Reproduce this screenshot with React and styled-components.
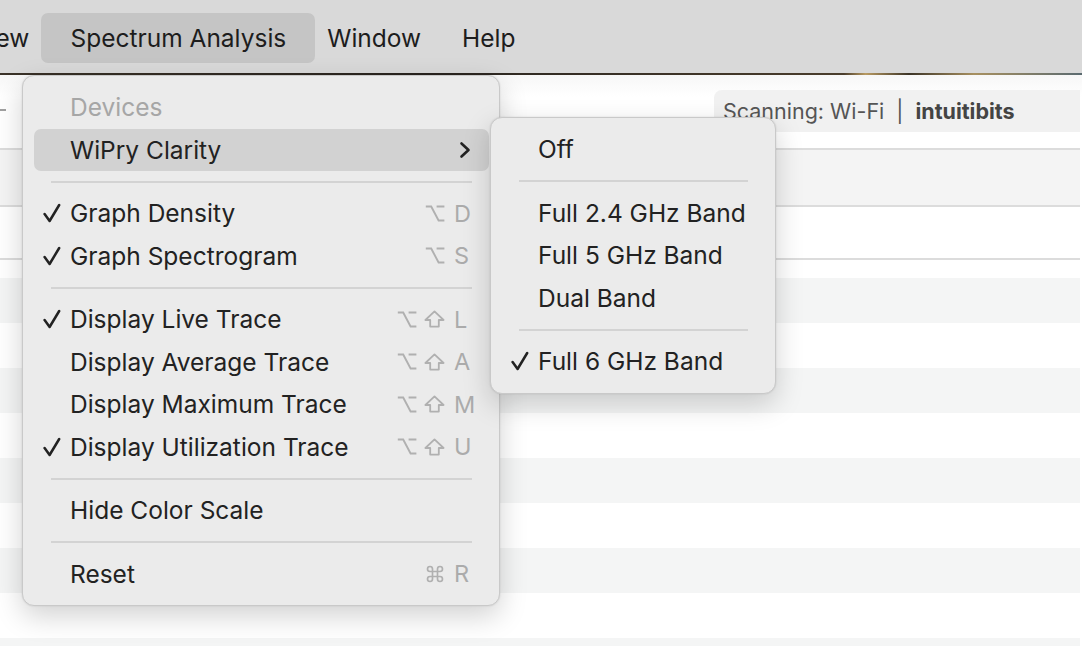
import styled, { createGlobalStyle } from "styled-components"
import { Command } from "lucide-react"

const GlobalStyle = createGlobalStyle`
    html, body {
        margin: 0;
        padding: 0;
        background: #ffffff;
        font-family: "Inter", "Liberation Sans", sans-serif;
        -webkit-font-smoothing: antialiased;
    }
`

const Page = styled.div`
    position: relative;
    width: 1082px;
    height: 646px;
    overflow: hidden;
    background: #ffffff;
`

const MenuBar = styled.div`
    height: 73px;
    background: #d9d9d9;
    display: flex;
    align-items: center;
`

const BarItems = styled.div`
    display: flex;
    align-items: center;
    margin-left: -25px;
    margin-top: 2px;
`

const BarTitle = styled.div`
    height: 50px;
    display: flex;
    align-items: center;
    padding: 0 29px;
    margin: 0 -8.5px;
    border-radius: 7px;
    font-size: 24.5px;
    color: #1d1d1d;
    background: ${(p) => (p.$open ? "#c5c5c5" : "transparent")};
`

const Wallpaper = styled.div`
    height: 2px;
    background: linear-gradient(90deg, #3a3228 0%, #2a2520 40%, #4a3d2c 78%, #b89a62 80%, #3b3326 84%, #a79060 90%, #5a6a70 100%);
`

const Window = styled.div`
    display: flex;
    flex-direction: column;
`

const Header = styled.div`
    height: 73px;
    display: flex;
    align-items: flex-start;
    background: linear-gradient(180deg, #f7f7f7 0%, #ffffff 30%);
`

const Stub = styled.div`
    width: 6px;
    height: 2px;
    background: #a0a0a0;
    margin-top: 34px;
`

const ScanBox = styled.div`
    margin-left: auto;
    margin-right: 2px;
    margin-top: 15px;
    width: 366px;
    height: 42px;
    background: #f1f1f1;
    border-radius: 8px 0 0 0;
    display: flex;
    align-items: center;
    padding-left: 9px;
    box-sizing: border-box;
    font-size: 21.5px;
    color: #555555;
    white-space: nowrap;

    b {
        color: #444444;
        font-weight: 700;
    }
`

const Pipe = styled.span`
    margin: 0 12px;
`

const Band = styled.div`
    height: ${(p) => p.$h}px;
    background: ${(p) => (p.$gray ? "#f4f4f4" : "#ffffff")};
    border-top: ${(p) => (p.$line ? "2px solid #dcdcdc" : "none")};
    margin-right: 2px;
`

const Stripe = styled.div`
    height: 45px;
    flex-shrink: 0;
    background: ${(p) => (p.$gray ? "#f4f5f5" : "#ffffff")};
    margin-right: 2px;
`

const Menu = styled.div`
    position: absolute;
    left: ${(p) => p.$x}px;
    top: ${(p) => p.$y}px;
    width: ${(p) => p.$w}px;
    box-sizing: border-box;
    padding: 10px 0;
    background: #ebebeb;
    border: 1px solid #c9c9c9;
    border-radius: 12px;
    box-shadow: 0 10px 28px rgba(0, 0, 0, 0.18), 0 0 2px rgba(0, 0, 0, 0.12);
`

const Item = styled.div`
    height: 42.5px;
    margin: 0 10px 0 11px;
    padding: 0 0 0 9px;
    display: flex;
    align-items: center;
    border-radius: 7px;
    font-size: 24.5px;
    color: ${(p) => (p.$disabled ? "#a6a6a6" : "#222222")};
    background: ${(p) => (p.$active ? "#d2d2d2" : "transparent")};
    white-space: nowrap;
`

const CheckCol = styled.div`
    width: 27px;
    flex-shrink: 0;
    display: flex;
    align-items: center;
`

const Label = styled.span`
    flex: 1;
`

const Shortcut = styled.div`
    display: flex;
    align-items: center;
    color: #ababab;
    padding-right: 13px;
`

const Mods = styled.div`
    display: flex;
    align-items: center;
    gap: 7px;
    margin-right: 9px;
`

const Key = styled.span`
    width: 22px;
    font-size: 23.5px;
`

const Chevron = styled.svg`
    margin-right: 18px;
`

const Separator = styled.div`
    height: 21px;
    display: flex;
    align-items: center;
    margin: 0 27px 0 28px;

    &::after {
        content: "";
        flex: 1;
        height: 2px;
        background: #d3d3d3;
    }
`

function Check() {
    return (
        <svg width="18" height="20" viewBox="0 0 18 20">
            <path d="M1.6 11 L6.6 18 L16.2 2" fill="none" stroke="#222" strokeWidth="2.5" strokeLinecap="round" strokeLinejoin="round" />
        </svg>
    )
}

function OptionKey() {
    return (
        <svg width="20" height="17" viewBox="0 0 20 17">
            <path d="M0.8 1.5 H6.2 L13.6 15.5 H19.4 M11.6 1.5 H19.4" fill="none" stroke="#b0b0b0" strokeWidth="1.9" />
        </svg>
    )
}

function ShiftKey() {
    return (
        <svg width="21" height="18" viewBox="0 0 21 18">
            <path d="M10.5 1.4 L19.6 10 H14.8 V16.6 H6.2 V10 H1.4 Z" fill="none" stroke="#b0b0b0" strokeWidth="1.8" strokeLinejoin="round" />
        </svg>
    )
}

function Keys({ opt, shift, cmd, k }) {
    return (
        <Shortcut>
            <Mods>
                {cmd && <Command size={20} strokeWidth={2} color="#b0b0b0" />}
                {opt && <OptionKey />}
                {shift && <ShiftKey />}
            </Mods>
            <Key>{k}</Key>
        </Shortcut>
    )
}

function MenuItem({ checked, label, keys, disabled, active, submenu }) {
    return (
        <Item $disabled={disabled} $active={active}>
            <CheckCol>{checked && <Check />}</CheckCol>
            <Label>{label}</Label>
            {keys && <Keys {...keys} />}
            {submenu && (
                <Chevron width="12" height="18" viewBox="0 0 12 18">
                    <path d="M2.5 2.5 L9.5 9 L2.5 15.5" fill="none" stroke="#222" strokeWidth="2.6" strokeLinecap="round" strokeLinejoin="round" />
                </Chevron>
            )}
        </Item>
    )
}

export default function App() {
    const stripes = [true, false, true, false, true, false, true, false, true]

    return (
        <Page>
            <GlobalStyle />
            <MenuBar>
                <BarItems>
                    <BarTitle>ew</BarTitle>
                    <BarTitle $open>Spectrum Analysis</BarTitle>
                    <BarTitle>Window</BarTitle>
                    <BarTitle>Help</BarTitle>
                </BarItems>
            </MenuBar>
            <Wallpaper />
            <Window>
                <Header>
                    <Stub />
                    <ScanBox>
                        Scanning: Wi-Fi<Pipe>|</Pipe><b>intuitibits</b>
                    </ScanBox>
                </Header>
                <Band $line $gray $h={55} />
                <Band $line $h={51} />
                <Band $line $h={18} />
                {stripes.map((g, i) => (
                    <Stripe key={i} $gray={g} />
                ))}
            </Window>

            <Menu $x={22} $y={75} $w={478}>
                <MenuItem label="Devices" disabled />
                <MenuItem label="WiPry Clarity" active submenu />
                <Separator />
                <MenuItem checked label="Graph Density" keys={{ opt: true, k: "D" }} />
                <MenuItem checked label="Graph Spectrogram" keys={{ opt: true, k: "S" }} />
                <Separator />
                <MenuItem checked label="Display Live Trace" keys={{ opt: true, shift: true, k: "L" }} />
                <MenuItem label="Display Average Trace" keys={{ opt: true, shift: true, k: "A" }} />
                <MenuItem label="Display Maximum Trace" keys={{ opt: true, shift: true, k: "M" }} />
                <MenuItem checked label="Display Utilization Trace" keys={{ opt: true, shift: true, k: "U" }} />
                <Separator />
                <MenuItem label="Hide Color Scale" />
                <Separator />
                <MenuItem label="Reset" keys={{ cmd: true, k: "R" }} />
            </Menu>

            <Menu $x={490} $y={117} $w={286}>
                <MenuItem label="Off" />
                <Separator />
                <MenuItem label="Full 2.4 GHz Band" />
                <MenuItem label="Full 5 GHz Band" />
                <MenuItem label="Dual Band" />
                <Separator />
                <MenuItem checked label="Full 6 GHz Band" />
            </Menu>
        </Page>
    )
}
